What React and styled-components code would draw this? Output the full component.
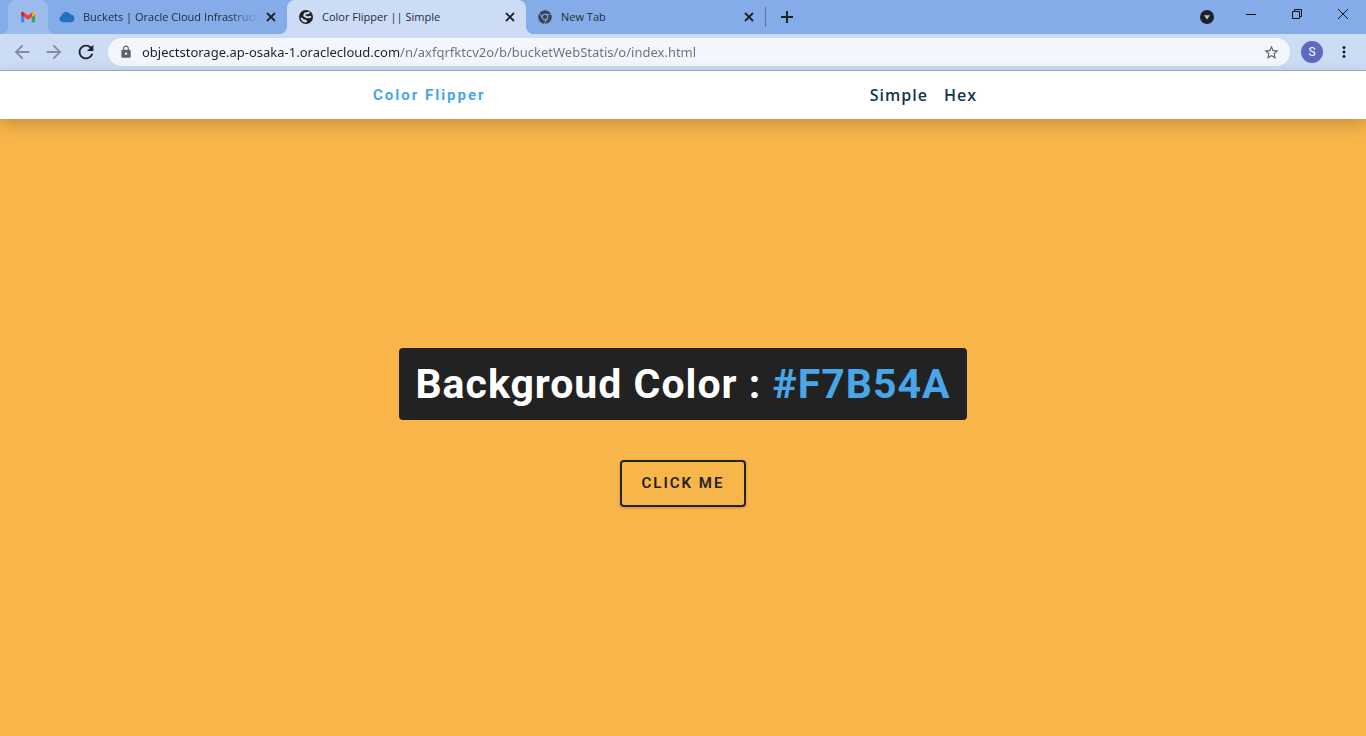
import React, { useState } from 'react';
import styled, { createGlobalStyle, css } from 'styled-components';
import { MdArrowBack, MdArrowForward, MdRefresh, MdLock, MdStarBorder, MdMoreVert } from 'react-icons/md';
import { FaChrome } from 'react-icons/fa';

const UI_FONT = '"Open Sans", "Noto Sans", sans-serif';
const STRIP = '#84ace9';
const PINNED = '#9dbcee';
const TOOLBAR = '#ccdcf5';
const BLUE = '#49a6e9';

const GlobalStyle = createGlobalStyle`
  *, *::before, *::after { box-sizing: border-box; }
  body { margin: 0; font-family: ${UI_FONT}; }
  button { border: 0; padding: 0; background: none; color: inherit; font: inherit; cursor: pointer; }
  svg { display: block; }
`;

const Page = styled.div`
  min-height: 100vh;
  display: flex;
  flex-direction: column;
`;

const TabStrip = styled.header`
  display: flex;
  height: 34px;
  background: ${STRIP};
`;

const Tabs = styled.div`
  display: flex;
  flex: 1;
  min-width: 0;
  padding-left: 8px;
`;

const raised = css`
  background: ${(p) => p.$fill};
  border-radius: 8px 8px 0 0;
  &::before, &::after {
    content: '';
    position: absolute;
    bottom: 0;
    width: 8px;
    height: 8px;
  }
  &::before {
    right: 100%;
    background: radial-gradient(circle at 0 0, transparent 8px, ${(p) => p.$fill} 8px);
  }
  &::after {
    left: 100%;
    background: radial-gradient(circle at 100% 0, transparent 8px, ${(p) => p.$fill} 8px);
  }
`;

const Tab = styled.div`
  position: relative;
  display: flex;
  align-items: center;
  flex: 0 1 ${(p) => (p.$pinned ? '40px' : '239px')};
  min-width: 40px;
  gap: 8px;
  padding: 0 ${(p) => (p.$pinned ? '12px' : '11px')};
  color: #252c36;
  ${(p) => p.$fill && raised}
`;

const TabIcon = styled.span`
  display: grid;
  place-items: center;
  flex: none;
  width: 16px;
  height: 16px;
  color: #3c4551;
`;

const TabTitle = styled.span`
  flex: 1;
  min-width: 0;
  overflow: hidden;
  white-space: nowrap;
  font-size: 11px;
  line-height: 16px;
  mask-image: ${(p) => (p.$fade ? 'linear-gradient(to left, transparent, #000 28px)' : 'none')};
`;

const TabClose = styled.button`
  display: grid;
  place-items: center;
  width: 10px;
  height: 16px;
  color: #202124;
`;

const Separator = styled.span`
  align-self: center;
  width: 1px;
  height: 20px;
  background: #5c7399;
`;

const StripButton = styled.button`
  display: grid;
  place-items: center;
  width: 28px;
  margin-left: 7px;
  color: #202124;
`;

const WindowControls = styled.div`
  display: flex;
`;

const WindowButton = styled.button`
  display: grid;
  place-items: center;
  width: ${(p) => p.$width || '46px'};
  height: ${(p) => p.$height || '28px'};
  color: #111;
`;

const Toolbar = styled.div`
  display: flex;
  align-items: center;
  height: 37px;
  padding: 0 6px;
  background: ${TOOLBAR};
  border-bottom: 1px solid #9fb0cc;
`;

const ToolButton = styled.button`
  display: grid;
  place-items: center;
  width: 32px;
  height: 28px;
  color: ${(p) => (p.$dim ? '#838da1' : '#202124')};
`;

const Omnibox = styled.label`
  display: flex;
  align-items: center;
  flex: 1;
  height: 28px;
  gap: 9px;
  margin: 0 8px 0 6px;
  padding: 0 10px 0 11px;
  border-radius: 14px;
  background: #f3f7fd;
  color: #5f6368;
`;

const Address = styled.input`
  flex: 1;
  min-width: 0;
  border: 0;
  padding: 0;
  outline: 0;
  font: 13px/20px "Noto Sans", sans-serif;
  color: transparent;
  caret-color: #202124;
  background: linear-gradient(to right, #202124 258px, #6c7075 258px);
  background-clip: text;
`;

const Avatar = styled.button`
  width: 22px;
  height: 22px;
  margin: 0 5px 0 3px;
  border-radius: 50%;
  background: #5c6bc0;
  color: #fff;
  font: 12px/22px Roboto, sans-serif;
`;

const Nav = styled.nav`
  position: relative;
  display: grid;
  place-items: center;
  height: 48px;
  background: #fff;
  box-shadow: 0 5px 15px rgba(0, 0, 0, 0.2);
`;

const NavCenter = styled.div`
  display: flex;
  align-items: center;
  justify-content: space-between;
  width: 90%;
  max-width: 620px;
`;

const Brand = styled.h4`
  margin: 0;
  font: 700 15px/20px Roboto, sans-serif;
  letter-spacing: 2px;
  color: ${BLUE};
`;

const NavLinks = styled.ul`
  display: flex;
  margin: 0;
  padding: 0;
  list-style: none;
`;

const NavLink = styled.a`
  display: block;
  padding-right: 16px;
  font: 600 16px/24px ${UI_FONT};
  letter-spacing: 1px;
  color: #14344e;
  text-decoration: none;
`;

const Main = styled.main`
  display: flex;
  flex: 1;
  flex-direction: column;
  align-items: center;
  justify-content: center;
  gap: 40px;
  background: ${(p) => p.$color};
`;

const Heading = styled.h2`
  margin: 0;
  padding: 16px;
  border-radius: 4px;
  background: #222;
  color: #fff;
  font: 700 41px/40px Roboto, sans-serif;
  letter-spacing: 1px;
`;

const ColorValue = styled.span`
  color: ${BLUE};
`;

const FlipButton = styled.button`
  && {
    padding: 12px 20px;
    border: 2px solid #222;
    border-radius: 4px;
    box-shadow: 0 1px 3px rgba(0, 0, 0, 0.2);
    color: #222;
    font: 600 15px/19px Roboto, sans-serif;
    letter-spacing: 2px;
    text-transform: uppercase;
  }
`;

const GmailIcon = () => (
  <svg width="16" height="16" viewBox="0 0 16 16">
    <path fill="#4285f4" d="M1 5v7.500a1 1 0 0 0 1 1h2.300V7.500z" />
    <path fill="#34a853" d="M15 5v7.500a1 1 0 0 1-1 1h-2.300V7.500z" />
    <path fill="#c5221f" d="M1 4.200v1.300l3.300 2.500V4.500L3.400 3C2.400 2.200 1 2.900 1 4.200z" />
    <path fill="#fbbc04" d="M15 4.200v1.300l-3.300 2.500V4.500l.9-1.500c1-.8 2.400-.1 2.400 1.200z" />
    <path fill="#ea4335" d="M3.400 3 8 6.500 12.600 3l-.9 5L8 10.800 4.300 8z" />
  </svg>
);

const CloudIcon = () => (
  <svg width="16" height="16" viewBox="0 0 16 16">
    <path fill="#2272bb" d="M3.500 13.300A3.600 3.600 0 0 1 2.700 6.400 4.900 4.900 0 0 1 11.600 5.600 3.900 3.900 0 0 1 12.300 13.300z" />
  </svg>
);

const GlobeIcon = () => (
  <svg width="16" height="16" viewBox="0 0 16 16">
    <circle cx="8" cy="8" r="7" fill="#202124" />
    <path
      fill="none"
      stroke={TOOLBAR}
      strokeWidth="2"
      strokeLinejoin="round"
      d="M11.500 3.200 9.500 4.300 7 4.600 6.200 6.600 8.200 8 10.800 8.200 13.200 7.600"
    />
    <path fill={TOOLBAR} d="M2.400 8.600A5.700 5.700 0 0 0 8.200 13.600l1-1.700L7.900 10.700 5.600 10.300 4.500 8.900z" />
  </svg>
);

const CrossIcon = () => (
  <svg width="10" height="10" viewBox="0 0 10 10" fill="none" stroke="currentColor" strokeWidth="1.800">
    <path d="M1 1l8 8M9 1L1 9" />
  </svg>
);

const COLORS = ['#F7B54A', '#4AF7B5', '#B54AF7', '#F74A6C'];

export default function App() {
  const [index, setIndex] = useState(0);
  const color = COLORS[index];

  return (
    <Page>
      <GlobalStyle />
      <TabStrip>
        <Tabs>
          <Tab $pinned $fill={PINNED}>
            <TabIcon><GmailIcon /></TabIcon>
          </Tab>
          <Tab>
            <TabIcon><CloudIcon /></TabIcon>
            <TabTitle $fade>Buckets | Oracle Cloud Infrastruct</TabTitle>
            <TabClose aria-label="Close tab"><CrossIcon /></TabClose>
          </Tab>
          <Tab $fill={TOOLBAR}>
            <TabIcon><GlobeIcon /></TabIcon>
            <TabTitle>Color Flipper || Simple</TabTitle>
            <TabClose aria-label="Close tab"><CrossIcon /></TabClose>
          </Tab>
          <Tab>
            <TabIcon><FaChrome size={14} /></TabIcon>
            <TabTitle>New Tab</TabTitle>
            <TabClose aria-label="Close tab"><CrossIcon /></TabClose>
          </Tab>
          <Separator />
          <StripButton aria-label="New tab">
            <svg width="12" height="12" viewBox="0 0 12 12" stroke="currentColor" strokeWidth="2">
              <path d="M6 0v12M0 6h12" />
            </svg>
          </StripButton>
        </Tabs>
        <WindowControls>
          <WindowButton $width="42px" $height="34px" aria-label="Search tabs">
            <svg width="14" height="14" viewBox="0 0 14 14">
              <circle cx="7" cy="7" r="7" fill="#202124" />
              <path d="M4 5.200h6L7 9.500z" fill="#a9c5f2" />
            </svg>
          </WindowButton>
          <WindowButton aria-label="Minimize">
            <svg width="10" height="10" viewBox="0 0 10 10"><path d="M0 5h10v1H0z" fill="currentColor" /></svg>
          </WindowButton>
          <WindowButton aria-label="Restore">
            <svg width="10" height="10" viewBox="0 0 10 10" fill="none" stroke="currentColor">
              <path d="M.5 2.500h7v7h-7zM2.500 2.500v-2h7v7h-2" />
            </svg>
          </WindowButton>
          <WindowButton aria-label="Close">
            <svg width="10" height="10" viewBox="0 0 10 10" stroke="currentColor"><path d="M0 0l10 10M10 0L0 10" /></svg>
          </WindowButton>
        </WindowControls>
      </TabStrip>

      <Toolbar>
        <ToolButton $dim aria-label="Back"><MdArrowBack size={22} /></ToolButton>
        <ToolButton $dim aria-label="Forward"><MdArrowForward size={22} /></ToolButton>
        <ToolButton aria-label="Reload"><MdRefresh size={22} /></ToolButton>
        <Omnibox>
          <MdLock size={14} />
          <Address
            aria-label="Address"
            defaultValue="objectstorage.ap-osaka-1.oraclecloud.com/n/axfqrfktcv2o/b/bucketWebStatis/o/index.html"
          />
          <MdStarBorder size={17} />
        </Omnibox>
        <Avatar aria-label="Profile">S</Avatar>
        <ToolButton aria-label="Menu"><MdMoreVert size={18} /></ToolButton>
      </Toolbar>

      <Nav>
        <NavCenter>
          <Brand>Color Flipper</Brand>
          <NavLinks>
            <li><NavLink href="#simple">Simple</NavLink></li>
            <li><NavLink href="#hex">Hex</NavLink></li>
          </NavLinks>
        </NavCenter>
      </Nav>

      <Main $color={color}>
        <Heading>
          Backgroud Color : <ColorValue>{color}</ColorValue>
        </Heading>
        <FlipButton onClick={() => setIndex((index + 1) % COLORS.length)}>Click me</FlipButton>
      </Main>
    </Page>
  );
}
